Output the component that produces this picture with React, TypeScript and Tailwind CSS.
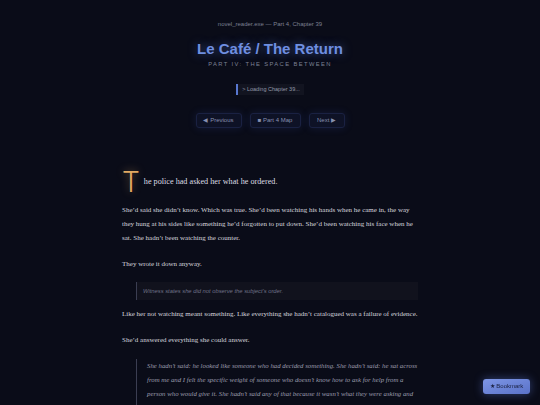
import React from "react";

export default function App() {
  return (
    <div className="min-h-screen bg-[#0a0c18] font-['Liberation_Sans',sans-serif] text-[#d6d6de]">
      <header className="flex flex-col items-center pt-[20px]">
        <div className="text-[6px] leading-[9px] text-[#7c8092]">
          novel_reader.exe — Part 4, Chapter 39
        </div>
        <h1 className="mt-[11px] text-[15px] leading-[18px] font-bold text-[#6f8fe0] [text-shadow:0_0_10px_rgba(95,135,235,0.55)]">
          Le Café / The Return
        </h1>
        <div className="mt-[2px] text-[5.8px] leading-[8px] tracking-[0.24em] text-[#7b8194] uppercase">
          Part IV: The Space Between
        </div>
        <div className="mt-[16px] flex h-[11px] items-center border-l-2 border-[#5877d0] bg-[#121420] px-[4px] text-[5.5px] text-[#9399ab]">
          &gt; Loading Chapter 39...
        </div>
        <nav className="mt-[18px] flex gap-[8px]">
          <button className="flex h-[15px] w-[46px] items-center justify-center rounded-[3px] border border-[#1a2142] bg-[#0e1226] text-[6px] text-[#8790b0] shadow-[0_0_8px_rgba(60,90,200,0.18)]">
            ◀ Previous
          </button>
          <button className="flex h-[15px] w-[51px] items-center justify-center rounded-[3px] border border-[#1a2142] bg-[#0e1226] text-[6px] text-[#8790b0] shadow-[0_0_8px_rgba(60,90,200,0.18)]">
            ■ Part 4 Map
          </button>
          <button className="flex h-[15px] w-[36px] items-center justify-center rounded-[3px] border border-[#1a2142] bg-[#0e1226] text-[6px] text-[#8790b0] shadow-[0_0_8px_rgba(60,90,200,0.18)]">
            Next ▶
          </button>
        </nav>
      </header>

      <main className="mx-auto mt-[44px] w-[296px] font-['Liberation_Serif',serif] text-[7px] leading-[14px]">
        <div className="flow-root">
          <span className="float-left mr-[4px] h-[20px] font-['Inter',sans-serif] text-[28px] font-light leading-[20px] text-[#e2a962] [text-shadow:0_0_8px_rgba(226,169,98,0.45)]">
            T
          </span>
          <p className="pt-[1px] text-[8.2px] leading-[18px] text-[#dcdce4]">
            he police had asked her what he ordered.
          </p>
        </div>

        <p className="mt-[11px]">
          She’d said she didn’t know. Which was true. She’d been watching his hands when he came in, the way
          they hung at his sides like something he’d forgotten to put down. She’d been watching his face when he
          sat. She hadn’t been watching the counter.
        </p>

        <p className="mt-[12px]">They wrote it down anyway.</p>

        <blockquote className="mt-[11px] ml-[14px] flex h-[18px] items-center border-l border-[#3b3e52] bg-[#11121d] pl-[6px] font-['Liberation_Sans',sans-serif] text-[5.8px] italic text-[#6e7186]">
          Witness states she did not observe the subject’s order.
        </blockquote>

        <p className="mt-[7px] whitespace-nowrap">
          Like her not watching meant something. Like everything she hadn’t catalogued was a failure of evidence.
        </p>

        <p className="mt-[12px]">She’d answered everything she could answer.</p>

        <blockquote className="mt-[12px] ml-[14px] border-l border-[#3b3e52] pl-[10px] text-[6.8px] italic text-[#9c9cae]">
          She hadn’t said: he looked like someone who had decided something. She hadn’t said: he sat across
          from me and I felt the specific weight of someone who doesn’t know how to ask for help from a
          person who would give it. She hadn’t said any of that because it wasn’t what they were asking and
          it wasn’t anything they would have written down.
        </blockquote>
      </main>

      <button className="fixed bottom-[11px] right-[10px] flex h-[15px] w-[47px] items-center justify-center rounded-[3px] bg-gradient-to-br from-[#7e96e6] to-[#5a72c8] text-[6px] text-[#1b2242] shadow-[0_0_10px_rgba(100,130,230,0.45)]">
        ★ Bookmark
      </button>
    </div>
  );
}
